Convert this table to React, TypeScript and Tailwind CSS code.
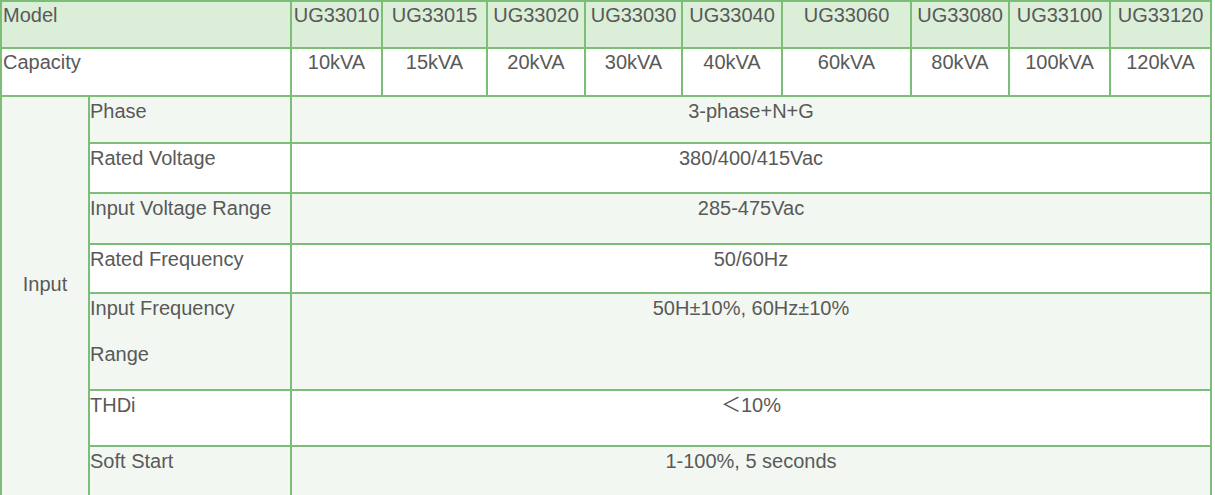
import React from "react";

const models = ["UG33010", "UG33015", "UG33020", "UG33030", "UG33040", "UG33060", "UG33080", "UG33100", "UG33120"];
const caps = ["10kVA", "15kVA", "20kVA", "30kVA", "40kVA", "60kVA", "80kVA", "100kVA", "120kVA"];

const rows: { label: string[]; value: string; light: boolean }[] = [
  { label: ["Phase"], value: "3-phase+N+G", light: true },
  { label: ["Rated Voltage"], value: "380/400/415Vac", light: false },
  { label: ["Input Voltage Range"], value: "285-475Vac", light: true },
  { label: ["Rated Frequency"], value: "50/60Hz", light: false },
  { label: ["Input Frequency", "Range"], value: "50H±10%, 60Hz±10%", light: true },
  { label: ["THDi"], value: "＜10%", light: false },
  { label: ["Soft Start"], value: "1-100%, 5 seconds", light: true },
];

export default function App() {
  return (
    <div className="w-[1215px] h-[495px] overflow-hidden bg-white">
      <div
        className="w-[1212px] grid gap-[2px] p-[2px] bg-[#7cbd77] text-[20px] leading-[23px] text-[#595959] grid-cols-[86px_200px_89px_103px_96px_95px_98px_127px_96px_99px_99px] grid-rows-[45px_46px_45px_48px_49px_47px_95px_54px_60px]"
        style={{ fontFamily: '"Liberation Sans", Arial, "Noto Sans CJK SC", sans-serif' }}
      >
        <div className="col-span-2 bg-[#dbeed8] pt-[2px] pl-[1px]">Model</div>
        {models.map((m) => (
          <div key={m} className="bg-[#dbeed8] pt-[2px] text-center whitespace-nowrap">
            {m}
          </div>
        ))}
        <div className="col-span-2 bg-white pt-[2px] pl-[1px]">Capacity</div>
        {caps.map((c) => (
          <div key={c} className="bg-white pt-[2px] text-center whitespace-nowrap">
            {c}
          </div>
        ))}
        <div className="row-span-7 bg-[#f2f8f1] pt-[176px] text-center">Input</div>
        {rows.map((r) => (
          <React.Fragment key={r.value}>
            <div className={`${r.light ? "bg-[#f2f8f1]" : "bg-white"} pt-[3px] whitespace-nowrap`}>
              {r.label.map((l, i) => (
                <div key={l} className={i > 0 ? "mt-[23px]" : ""}>
                  {l}
                </div>
              ))}
            </div>
            <div className={`col-span-9 ${r.light ? "bg-[#f2f8f1]" : "bg-white"} pt-[3px] text-center`}>
              {r.value}
            </div>
          </React.Fragment>
        ))}
      </div>
    </div>
  );
}
